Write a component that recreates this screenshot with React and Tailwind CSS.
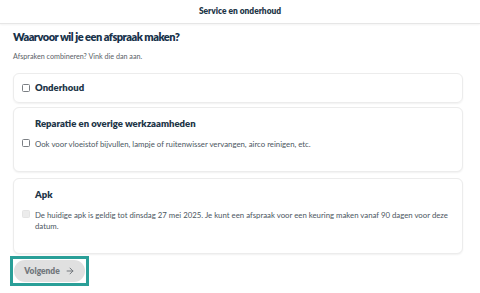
import React from 'react'
import { ArrowRight } from 'lucide-react'

const Box = ({ disabled }) => (
  <span
    className={`block w-[8px] h-[8px] shrink-0 rounded-[1.5px] border ${
      disabled ? 'border-[#e4e4e4] bg-[#ececec]' : 'border-[#7b7f84] bg-white'
    }`}
  />
)

const Card = ({ title, text, disabled, className = '' }) => (
  <div className={`rounded-[6px] border border-[#ececec] bg-white shadow-[0_1px_2px_rgba(0,0,0,0.06)] px-[8px] pt-[9px] pb-[21px] ${className}`}>
    <div className="pl-[13px] text-[9.5px] leading-[14px] font-extrabold text-[#1d3547]">{title}</div>
    <div className="mt-[8px] flex items-start gap-[5px] pr-[2px]">
      <Box disabled={disabled} />
      <p className="text-[7.8px] leading-[11px] text-[#4b5661]">{text}</p>
    </div>
  </div>
)

export default function App() {
  return (
    <div className="w-[480px] h-[293px] bg-white font-['Lato',sans-serif] overflow-hidden">
      {/* header */}
      <div className="h-[24px] flex items-center justify-center border-b border-[#e6e6e6] shadow-[0_1px_2px_rgba(0,0,0,0.05)]">
        <span className="text-[8.4px] font-extrabold text-[#1d3547]">Service en onderhoud</span>
      </div>

      <div className="px-[13px] w-[476px]">
        <h1 className="mt-[5px] text-[11px] leading-[16px] tracking-[-0.5px] font-extrabold text-[#17324a]">
          Waarvoor wil je een afspraak maken?
        </h1>
        <p className="mt-[7px] text-[7.2px] leading-[10px] text-[#5b6268]">
          Afspraken combineren? Vink die dan aan.
        </p>

        <div className="mt-[11px] h-[30px] flex items-center gap-[5px] px-[8px] rounded-[6px] border border-[#ececec] shadow-[0_1px_2px_rgba(0,0,0,0.06)]">
          <Box />
          <span className="text-[9.5px] font-extrabold text-[#1d3547]">Onderhoud</span>
        </div>

        <Card
          className="mt-[4px]"
          title="Reparatie en overige werkzaamheden"
          text="Ook voor vloeistof bijvullen, lampje of ruitenwisser vervangen, airco reinigen, etc."
        />

        <Card
          className="mt-[6px]"
          disabled
          title="Apk"
          text="De huidige apk is geldig tot dinsdag 27 mei 2025. Je kunt een afspraak voor een keuring maken vanaf 90 dagen voor deze datum."
        />

        <div className="mt-[2px] -ml-[3px] flex w-fit border-[3px] border-[#2a9f98] p-[1px]">
          <button className="h-[22px] w-[71px] rounded-full bg-[#e0e0e0] flex items-center justify-center gap-[5px] text-[8.4px] font-extrabold text-[#72777c]">
            Volgende
            <ArrowRight size={10} strokeWidth={2.4} />
          </button>
        </div>
      </div>
    </div>
  )
}
